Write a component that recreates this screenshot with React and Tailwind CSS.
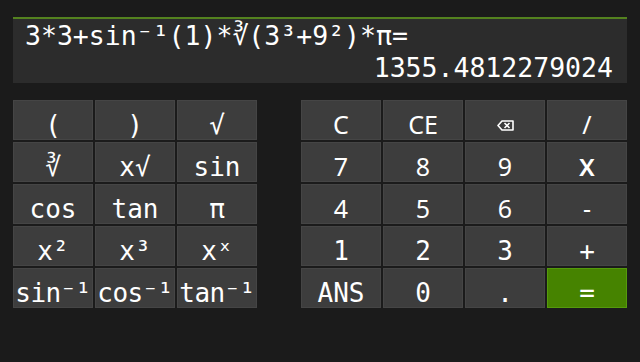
import React from "react";

const mono = "font-['DejaVu_Sans_Mono','Liberation_Mono',monospace]";
const sans = "font-['Noto_Sans','DejaVu_Sans',sans-serif]";

function Key({ children, kind = "mono", green = false, extra = "" }) {
  const base =
    "h-[40px] text-center text-white leading-[29px] border whitespace-nowrap " +
    (green ? "bg-[#468300] border-[#559a0c] " : "bg-[#3d3d3d] border-[#454545] ");
  const font =
    kind === "mono"
      ? mono + " text-[26px] pt-[10px]"
      : kind === "sans"
      ? sans + " text-[25px] pt-[9px]"
      : "";
  return <div className={base + font + " " + extra}>{children}</div>;
}

function Backspace() {
  return (
    <div className="h-[40px] bg-[#3d3d3d] border border-[#454545] flex justify-center pt-[19px]">
      <svg width="17" height="11" viewBox="0 0 17 11">
        <path d="M1 5.5 L5 1 H16 V10 H5 Z" fill="none" stroke="#fff" strokeWidth="1.6" strokeLinejoin="round" />
        <path d="M7.5 3 L12.5 8 M12.5 3 L7.5 8" stroke="#fff" strokeWidth="1.6" />
      </svg>
    </div>
  );
}

export default function App() {
  return (
    <div className="w-[640px] h-[362px] bg-[#1b1b1b] pt-[17px] px-[13px] overflow-hidden">
      <div className={"h-[66px] bg-[#2c2c2c] border-t-2 border-[#54821f] pt-[1px] pl-[12px] pr-[14px] text-white text-[26.5px] leading-[32px] " + mono}>
        <div className="whitespace-nowrap">3*3+sin⁻¹(1)*∛(3³+9²)*π=</div>
        <div className="text-right whitespace-nowrap">1355.4812279024</div>
      </div>
      <div className="flex mt-[17px]">
        <div className="grid grid-cols-[80px_80px_80px] auto-rows-[40px] gap-[2px]">
          <Key>(</Key>
          <Key>)</Key>
          <Key>√</Key>
          <Key>∛</Key>
          <Key>x√</Key>
          <Key>sin</Key>
          <Key>cos</Key>
          <Key>tan</Key>
          <Key>π</Key>
          <Key>x²</Key>
          <Key>x³</Key>
          <Key>xˣ</Key>
          <Key extra="tracking-[-0.6px]">sin⁻¹</Key>
          <Key extra="tracking-[-0.6px]">cos⁻¹</Key>
          <Key extra="tracking-[-0.6px]">tan⁻¹</Key>
        </div>
        <div className="ml-[44px] grid grid-cols-[80px_80px_80px_80px] auto-rows-[40px] gap-[2px]">
          <Key kind="sans">C</Key>
          <Key kind="sans">CE</Key>
          <Backspace />
          <Key kind="sans">/</Key>
          <Key kind="sans">7</Key>
          <Key kind="sans">8</Key>
          <Key kind="sans">9</Key>
          <Key kind="sans" extra="!text-[30px] font-medium !pt-[7px]">x</Key>
          <Key kind="sans">4</Key>
          <Key kind="sans">5</Key>
          <Key kind="sans">6</Key>
          <Key kind="sans">-</Key>
          <Key>1</Key>
          <Key>2</Key>
          <Key>3</Key>
          <Key>+</Key>
          <Key>ANS</Key>
          <Key>0</Key>
          <Key>.</Key>
          <Key green>=</Key>
        </div>
      </div>
    </div>
  );
}
